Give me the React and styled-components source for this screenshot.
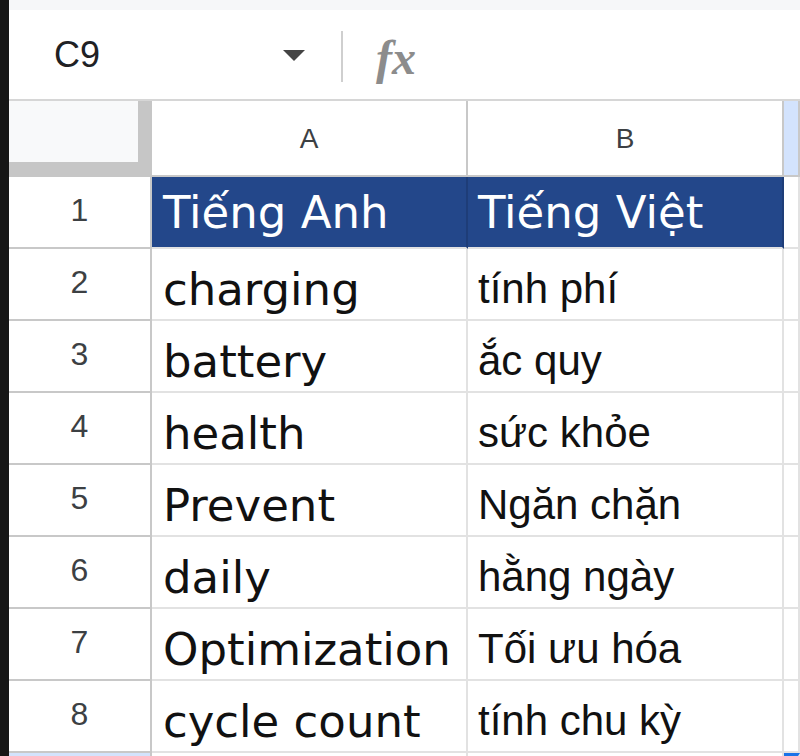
import React from 'react'
import styled, { createGlobalStyle } from 'styled-components'

const GlobalStyle = createGlobalStyle`
    html, body {
        margin: 0;
        padding: 0;
        background: #fff;
        overflow: hidden;
    }
`;

const Frame = styled.div`
    display: flex;
    width: 800px;
    height: 756px;
    overflow: hidden;
    background: #fff;
`;

const LeftEdge = styled.div`
    width: 9px;
    flex: none;
    background: #161616;
`;

const Main = styled.div`
    flex: 1;
    display: flex;
    flex-direction: column;
    min-width: 0;
`;

const TopStrip = styled.div`
    flex: none;
    height: 10px;
    background: #f6f7f9;
`;

const FormulaBar = styled.div`
    flex: none;
    height: 89px;
    display: flex;
    align-items: center;
    border-bottom: 2px solid #d6d6d6;
`;

const NameBox = styled.div`
    width: 296px;
    display: flex;
    align-items: center;
    justify-content: space-between;
    padding-left: 45px;
    box-sizing: border-box;
    font-family: "Liberation Sans", Arial, sans-serif;
    font-size: 36px;
    color: #202124;
`;

const Caret = styled.span`
    width: 0;
    height: 0;
    border-left: 11px solid transparent;
    border-right: 11px solid transparent;
    border-top: 11px solid #444;
    margin-top: 2px;
`;

const Divider = styled.div`
    width: 2px;
    height: 51px;
    background: #cfcfcf;
    margin-left: 36px;
    margin-top: 4px;
`;

const Fx = styled.div`
    margin-left: 33px;
    margin-top: 6px;
    font-family: "Liberation Serif", "DejaVu Serif", serif;
    font-size: 48px;
    font-style: italic;
    font-weight: bold;
    color: #8c8c8c;
`;

const Sheet = styled.div`
    flex: none;
    display: grid;
    grid-template-columns: 143px 316px 316px 1fr;
    grid-template-rows: 76px repeat(8, 72px) 20px;
`;

const Corner = styled.div`
    background: #f8f9fa;
    border-right: 14px solid #c6c6c6;
    border-bottom: 15px solid #c6c6c6;
`;

const ColHead = styled.div`
    display: flex;
    align-items: center;
    justify-content: center;
    background: ${p => (p.$active ? '#d3e3fd' : '#fff')};
    border-right: 2px solid #c8c8c8;
    border-bottom: 2px solid #c8c8c8;
    font-family: "Liberation Sans", Arial, sans-serif;
    font-size: 28px;
    color: #3c4043;
    padding-top: 2px;
`;

const RowHead = styled.div`
    display: flex;
    align-items: center;
    justify-content: center;
    background: ${p => (p.$active ? '#d3e3fd' : '#fff')};
    border-right: 2px solid #c8c8c8;
    border-bottom: 2px solid #c8c8c8;
    font-family: "Liberation Sans", Arial, sans-serif;
    font-size: 32px;
    color: #3c4043;
    padding-bottom: 3px;
`;

const Cell = styled.div`
    display: flex;
    align-items: flex-end;
    padding: 0 0 ${p => (p.$title ? 12 : p.$viet ? 9 : 7)}px ${p => (p.$viet ? 10 : 11)}px;
    overflow: hidden;
    white-space: nowrap;
    background: ${p => (p.$title ? '#23478a' : '#fff')};
    border-right: 2px solid ${p => (p.$title ? '#1e3d78' : '#e2e2e2')};
    border-bottom: 2px solid #e2e2e2;
    border-top: ${p => (p.$selected ? '3px solid #1a73e8' : 'none')};
    font-family: ${p => (p.$viet && !p.$title
        ? '"Liberation Sans", Arial, sans-serif'
        : '"DejaVu Sans", Verdana, sans-serif')};
    font-size: ${p => (p.$viet && !p.$title ? 42 : 45)}px;
    line-height: 1;
    color: ${p => (p.$title ? '#fff' : '#111')};
`;

const words = [
    ['charging', 'tính phí'],
    ['battery', 'ắc quy'],
    ['health', 'sức khỏe'],
    ['Prevent', 'Ngăn chặn'],
    ['daily', 'hằng ngày'],
    ['Optimization', 'Tối ưu hóa'],
    ['cycle count', 'tính chu kỳ'],
];

const App = () => {
    return(
        <>
        <GlobalStyle />
        <Frame>
            <LeftEdge />
            <Main>
                <TopStrip />
                <FormulaBar>
                    <NameBox>
                        <span>C9</span>
                        <Caret />
                    </NameBox>
                    <Divider />
                    <Fx>fx</Fx>
                </FormulaBar>
                <Sheet>
                    <Corner />
                    <ColHead>A</ColHead>
                    <ColHead>B</ColHead>
                    <ColHead $active />

                    <RowHead>1</RowHead>
                    <Cell $title>Tiếng Anh</Cell>
                    <Cell $title $viet>Tiếng Việt</Cell>
                    <Cell />

                    {words.map(([en, vi], i) => (
                        <React.Fragment key={en}>
                            <RowHead>{i + 2}</RowHead>
                            <Cell>{en}</Cell>
                            <Cell $viet>{vi}</Cell>
                            <Cell />
                        </React.Fragment>
                    ))}

                    <RowHead $active />
                    <Cell />
                    <Cell />
                    <Cell $selected />
                </Sheet>
            </Main>
        </Frame>
        </>
    )
}

export default App
